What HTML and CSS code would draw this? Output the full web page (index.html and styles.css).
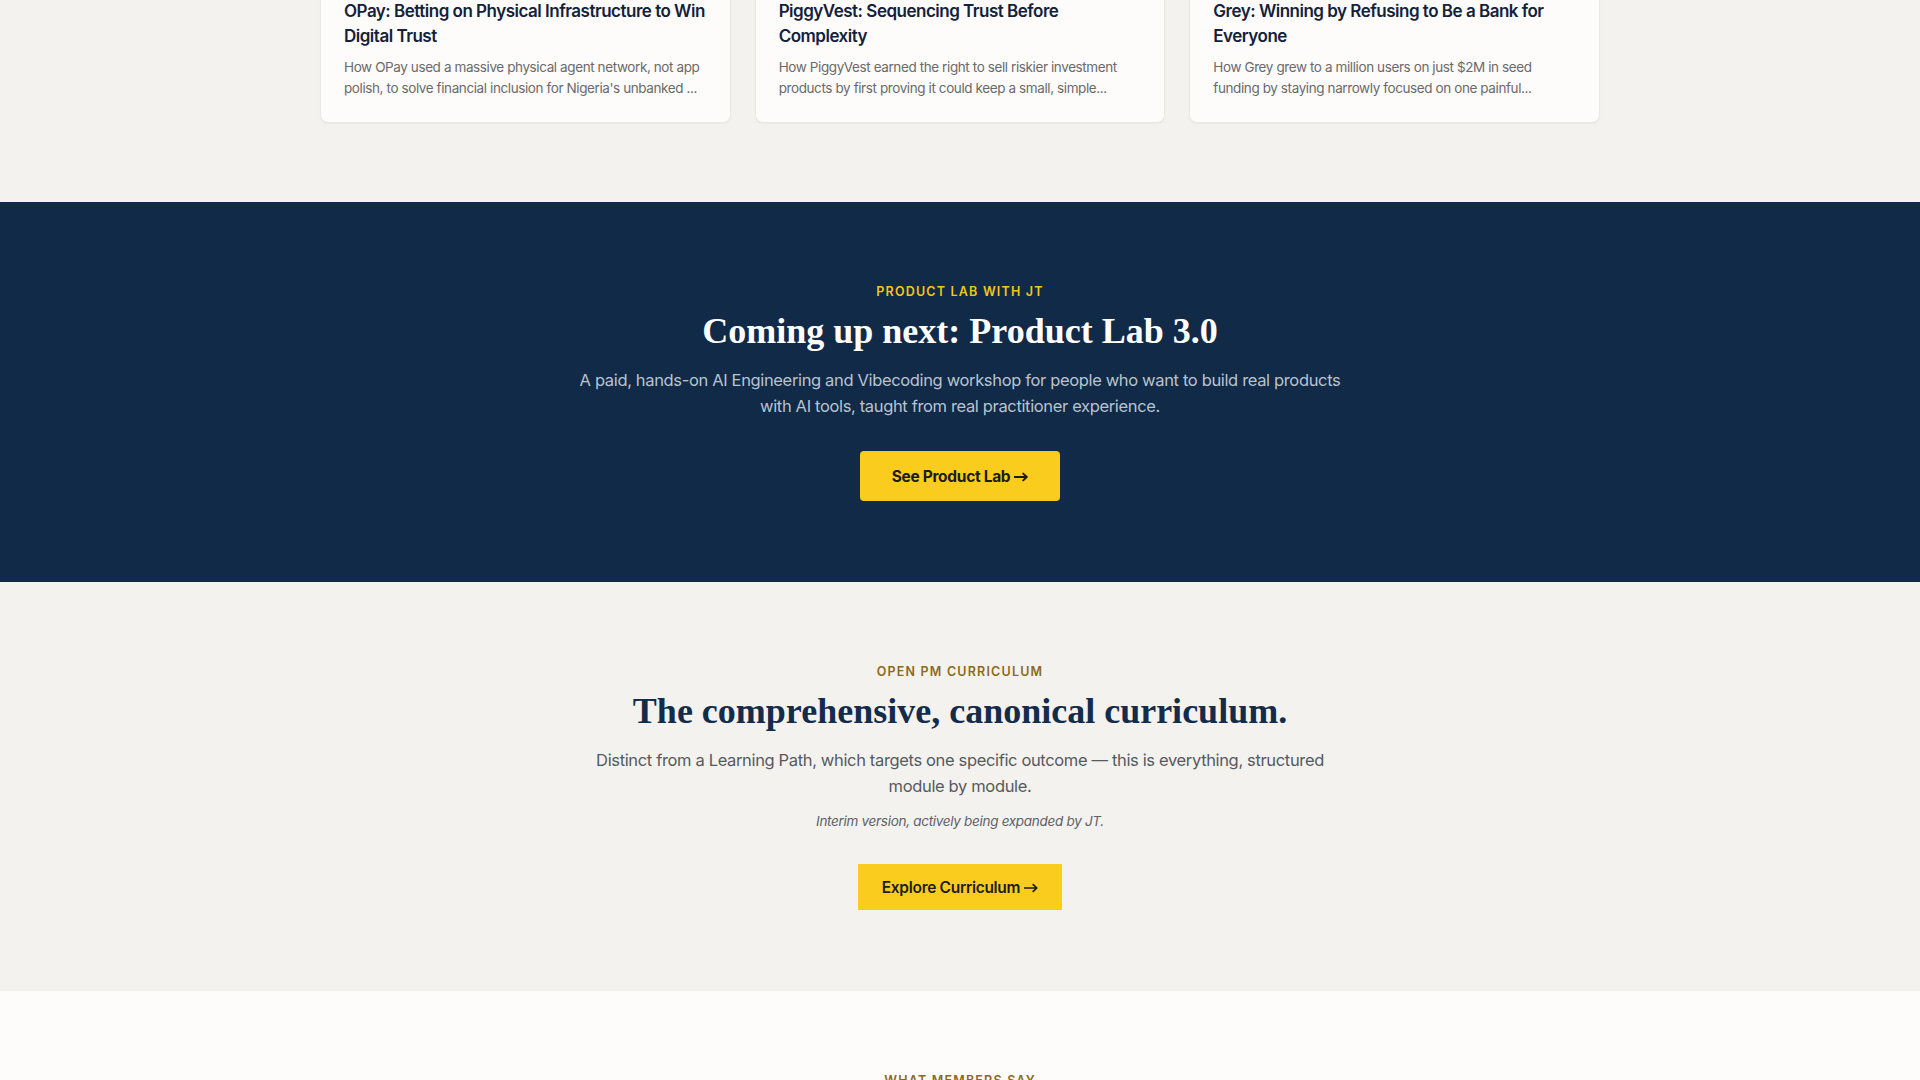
FILE: index.html
```html
<!DOCTYPE html>
<html lang="en">
<head>
<meta charset="utf-8">
<title>Product Lab</title>
<link rel="stylesheet" href="styles.css">
</head>
<body>
<section class="cases">
  <div class="container case-grid">
    <article class="card">
      <h3 class="card-title">OPay: Betting on Physical Infrastructure to Win Digital Trust</h3>
      <p class="card-desc">How OPay used a massive physical agent network, not app polish, to solve financial inclusion for Nigeria's unbanked ...</p>
    </article>
    <article class="card">
      <h3 class="card-title">PiggyVest: Sequencing Trust Before Complexity</h3>
      <p class="card-desc">How PiggyVest earned the right to sell riskier investment products by first proving it could keep a small, simple...</p>
    </article>
    <article class="card">
      <h3 class="card-title">Grey: Winning by Refusing to Be a Bank for Everyone</h3>
      <p class="card-desc">How Grey grew to a million users on just $2M in seed funding by staying narrowly focused on one painful...</p>
    </article>
  </div>
</section>

<section class="band band-dark">
  <p class="eyebrow eyebrow-yellow">Product Lab with JT</p>
  <h2 class="band-title">Coming up next: Product Lab 3.0</h2>
  <p class="band-text">A paid, hands-on AI Engineering and Vibecoding workshop for people who want to build real products with AI tools, taught from real practitioner experience.</p>
  <a class="btn btn-rounded" href="#">See Product Lab <svg class="arrow" width="14" height="10" viewBox="0 0 14 10" aria-hidden="true"><path d="M0 5H12.6M9.2 1.6L12.8 5L9.2 8.4" fill="none" stroke="currentColor" stroke-width="1.9" stroke-linecap="round" stroke-linejoin="round"/></svg></a>
</section>

<section class="band band-light">
  <p class="eyebrow eyebrow-gold">Open PM Curriculum</p>
  <h2 class="band-title band-title-navy">The comprehensive, canonical curriculum.</h2>
  <p class="band-text band-text-gray">Distinct from a Learning Path, which targets one specific outcome — this is everything, structured module by module.</p>
  <p class="note">Interim version, actively being expanded by JT.</p>
  <a class="btn btn-square" href="#">Explore Curriculum <svg class="arrow" width="14" height="10" viewBox="0 0 14 10" aria-hidden="true"><path d="M0 5H12.6M9.2 1.6L12.8 5L9.2 8.4" fill="none" stroke="currentColor" stroke-width="1.7" stroke-linecap="round" stroke-linejoin="round"/></svg></a>
</section>

<section class="band band-white">
  <p class="eyebrow eyebrow-gold">What members say</p>
</section>
</body>
</html>
```

FILE: styles.css
```css
* { box-sizing: border-box; }

html, body {
  margin: 0;
  padding: 0;
}

body {
  background: #f4f2ee;
  font-family: "Inter", "Noto Sans", sans-serif;
  color: #14263d;
  overflow: hidden;
}

.container {
  max-width: 1280px;
  margin: 0 auto;
}

.cases {
  margin-top: -25px;
  padding-bottom: 79px;
}

.case-grid {
  display: grid;
  grid-template-columns: repeat(3, 1fr);
  gap: 24px;
}

.card {
  background: #fdfcfb;
  border: 1px solid #ebe8e3;
  border-radius: 8px;
  padding: 23px 23px 23px;
  box-shadow: 0 1px 2px rgba(20, 30, 45, 0.04);
}

.card-title {
  margin: 0;
  font-size: 17px;
  line-height: 25px;
  font-weight: 600;
  color: #13223a;
  letter-spacing: -0.5px;
}

.card-desc {
  margin: 8px 0 0;
  font-size: 13.5px;
  line-height: 21px;
  color: #6a6a6a;
  letter-spacing: -0.4px;
  display: -webkit-box;
  -webkit-line-clamp: 2;
  -webkit-box-orient: vertical;
  overflow: hidden;
}

.band {
  display: flex;
  flex-direction: column;
  align-items: center;
  text-align: center;
  padding: 80px 24px 81px;
}

.band-dark {
  background: #102a47;
}

.band-light {
  background: #f4f2ee;
}

.band-white {
  background: #fdfcfa;
  min-height: 200px;
}

.eyebrow {
  margin: 0;
  font-size: 12.5px;
  line-height: 19px;
  font-weight: 600;
  letter-spacing: 1.2px;
  text-transform: uppercase;
}

.eyebrow-yellow { color: #f5c518; }
.eyebrow-gold { color: #8c6a1c; }

.band-title {
  margin: 8px 0 0;
  font-family: "Liberation Serif", "Times New Roman", serif;
  font-weight: 700;
  font-size: 36px;
  line-height: 44px;
  color: #ffffff;
}

.band-title-navy { color: #132c4b; }

.band-text {
  margin: 15px 0 0;
  max-width: 770px;
  font-size: 16.5px;
  line-height: 25.5px;
  color: #b9c3d0;
  letter-spacing: -0.35px;
}

.band-text-gray { color: #555a60; }

.note {
  margin: 12px 0 0;
  font-size: 13.5px;
  line-height: 20px;
  font-style: italic;
  color: #5d6166;
  letter-spacing: -0.3px;
}

.btn {
  display: inline-flex;
  align-items: center;
  justify-content: center;
  gap: 4px;
  margin-top: 32px;
  background: #f9cc1d;
  color: #1c1c1c;
  text-decoration: none;
  font-size: 15.5px;
  font-weight: 700;
  letter-spacing: -0.3px;
}

.btn-rounded {
  width: 200px;
  height: 50px;
  border-radius: 4px;
}

.btn-square {
  width: 204px;
  height: 46px;
  font-weight: 600;
  margin-top: 33px;
}

.arrow {
  display: block;
  margin-top: 2px;
}
```
